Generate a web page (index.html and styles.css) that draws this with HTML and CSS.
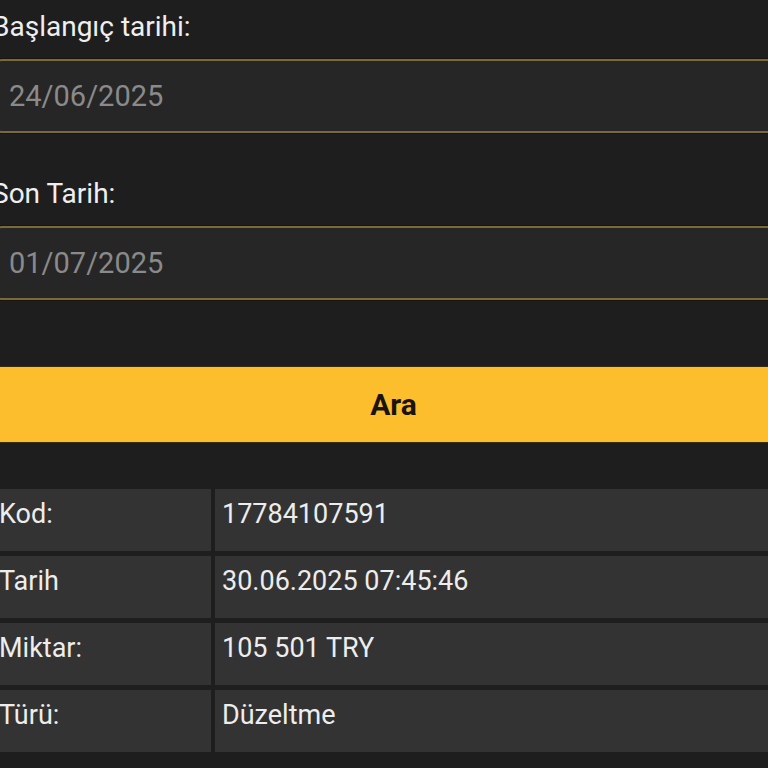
FILE: index.html
```html
<!DOCTYPE html>
<html lang="tr">
<head>
<meta charset="utf-8">
<title>Arama</title>
<link rel="stylesheet" href="styles.css">
</head>
<body>
<main class="page">
  <form class="search">
    <div class="field">
      <label class="label" for="start">Başlangıç tarihi:</label>
      <input class="input" id="start" type="text" placeholder="24/06/2025">
    </div>
    <div class="field">
      <label class="label" for="end">Son Tarih:</label>
      <input class="input" id="end" type="text" placeholder="01/07/2025">
    </div>
    <button class="btn" type="button">Ara</button>
  </form>
  <div class="result">
    <div class="cell key">Kod:</div><div class="cell val">17784107591</div>
    <div class="cell key">Tarih</div><div class="cell val">30.06.2025 07:45:46</div>
    <div class="cell key">Miktar:</div><div class="cell val">105 501 TRY</div>
    <div class="cell key">Türü:</div><div class="cell val">Düzeltme</div>
  </div>
</main>
</body>
</html>
```

FILE: styles.css
```css
* { box-sizing: border-box; }
html, body {
  margin: 0;
  padding: 0;
  background: #1e1e1e;
  overflow: hidden;
}
body {
  font-family: Roboto, "Noto Sans", sans-serif;
  color: #ececec;
}
.page {
  width: 803px;
  margin-left: -8px;
  padding-top: 11px;
}
.search {
  display: flex;
  flex-direction: column;
}
.field {
  display: flex;
  flex-direction: column;
  margin-bottom: 45px;
}
.label {
  font-size: 28px;
  line-height: 32px;
  color: #efefef;
  margin-bottom: 16px;
}
.input {
  height: 74px;
  border: 2px solid #7a6a3b;
  border-radius: 10px;
  background: #262626;
  padding: 0 15px;
  font-family: Roboto, "Noto Sans", sans-serif;
  font-size: 29px;
  color: #8a8a8a;
  outline: none;
  box-shadow: 0 0 0 1px #1a160c;
}
.input::placeholder {
  color: #8a8a8a;
  opacity: 1;
}
.field + .btn { margin-top: 22px; }
.btn {
  height: 75px;
  border: none;
  background: #fdbe2d;
  color: #1a1410;
  font-family: Roboto, "Noto Sans", sans-serif;
  font-weight: 700;
  font-size: 30px;
  box-shadow: 0 -1px 0 #3a2c10, 0 1px 0 #3a2c10;
}
.result {
  margin-top: 47px;
  display: grid;
  grid-template-columns: 219px 1fr;
  column-gap: 4px;
  row-gap: 5px;
}
.cell {
  height: 62px;
  background: #333333;
  padding: 9px 7px 0;
  font-size: 27px;
  line-height: 32px;
  color: #ededed;
}
```
